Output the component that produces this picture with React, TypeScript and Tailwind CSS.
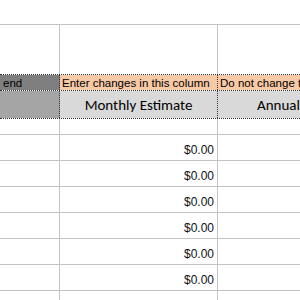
const grid = 'border-[#c4c4c4]';

function BodyRow({ value }: { value?: string }) {
  return (
    <div className={`flex h-[26px] shrink-0 border-b ${grid}`}>
      <div className={`w-[60px] shrink-0 border-r ${grid}`} />
      <div className={`w-[158px] shrink-0 border-r ${grid} flex items-end justify-end pr-[3px] pb-[1px] text-[12px] text-[#111]`}>
        {value}
      </div>
      <div className="flex-1" />
    </div>
  );
}

export default function App() {
  const rows = ['$0.00', '$0.00', '$0.00', '$0.00', '$0.00', '$0.00', ''];
  return (
    <div className="w-[300px] h-[300px] overflow-hidden bg-white flex flex-col" style={{ fontFamily: '"Liberation Sans", Arial, sans-serif' }}>
      {/* area above the sheet */}
      <div className={`h-[25px] shrink-0 border-b ${grid}`} />

      {/* tall blank row */}
      <div className="flex h-[49px] shrink-0">
        <div className={`w-[60px] shrink-0 border-r ${grid}`} />
        <div className={`w-[158px] shrink-0 border-r ${grid}`} />
        <div className="flex-1" />
      </div>

      {/* instruction row */}
      <div className="flex h-[17px] shrink-0 border-y border-dotted border-[#333] text-[11.5px] leading-[16px] text-black whitespace-nowrap">
        <div className="w-[60px] shrink-0 bg-[#7f7f7f] border-r border-dotted border-[#333] overflow-hidden pl-[3px]">end</div>
        <div className="w-[158px] shrink-0 bg-[#f7c9a6] border-r border-dotted border-[#333] overflow-hidden pl-[2px]">Enter changes in this column</div>
        <div className="flex-1 bg-[#f7c9a6] overflow-hidden pl-[2px]">Do not change this column</div>
      </div>

      {/* column titles */}
      <div className="flex h-[28px] shrink-0 border-b border-dotted border-[#333] text-[15px] text-black whitespace-nowrap" style={{ fontFamily: 'Carlito, Lato, "Liberation Sans", sans-serif' }}>
        <div className="w-[60px] shrink-0 bg-[#a5a5a5] border-r border-dotted border-[#333]" />
        <div className="w-[158px] shrink-0 bg-[#d9d9d9] border-r border-dotted border-[#333] flex items-center justify-center pt-[1px]">Monthly Estimate</div>
        <div className="flex-1 bg-[#d9d9d9] overflow-hidden flex items-center pl-[39px] pt-[1px]">Annual Estimate</div>
      </div>

      {/* spacer row */}
      <div className={`flex h-[16px] shrink-0 border-b ${grid}`}>
        <div className={`w-[60px] shrink-0 border-r ${grid}`} />
        <div className={`w-[158px] shrink-0 border-r ${grid}`} />
        <div className="flex-1" />
      </div>

      {rows.map((v, i) => (
        <BodyRow key={i} value={v} />
      ))}
    </div>
  );
}
